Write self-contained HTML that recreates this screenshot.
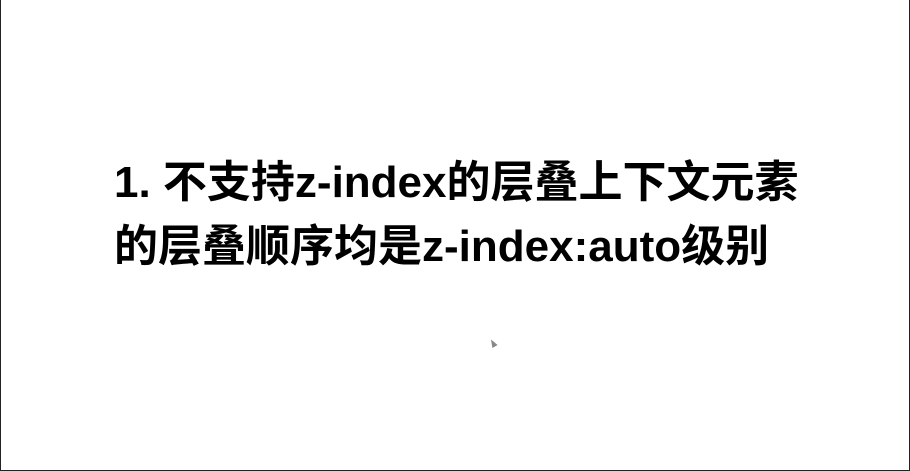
<!DOCTYPE html>
<html><head><meta charset="utf-8"><style>
html,body{margin:0;padding:0}
body{width:910px;height:471px;background:#fff;position:relative;overflow:hidden;box-sizing:border-box;border-left:1px solid #222;border-right:1px solid #222;border-bottom:1px solid #222}
.t{position:absolute;left:113px;top:151px;font-family:"Liberation Sans","Noto Sans CJK SC",sans-serif;font-weight:bold;font-size:44px;line-height:64px;color:#000;white-space:nowrap;letter-spacing:0px}
.c{position:absolute;left:489px;top:339px;width:0;height:0;border-left:3px solid transparent;border-right:3px solid transparent;border-bottom:8px solid #888;transform:rotate(-30deg)}
</style></head><body>
<div class="t">1. 不支持z-index的层叠上下文元素<br>的层叠顺序均是z-index:auto级别</div>
<div class="c"></div>
</body></html>
